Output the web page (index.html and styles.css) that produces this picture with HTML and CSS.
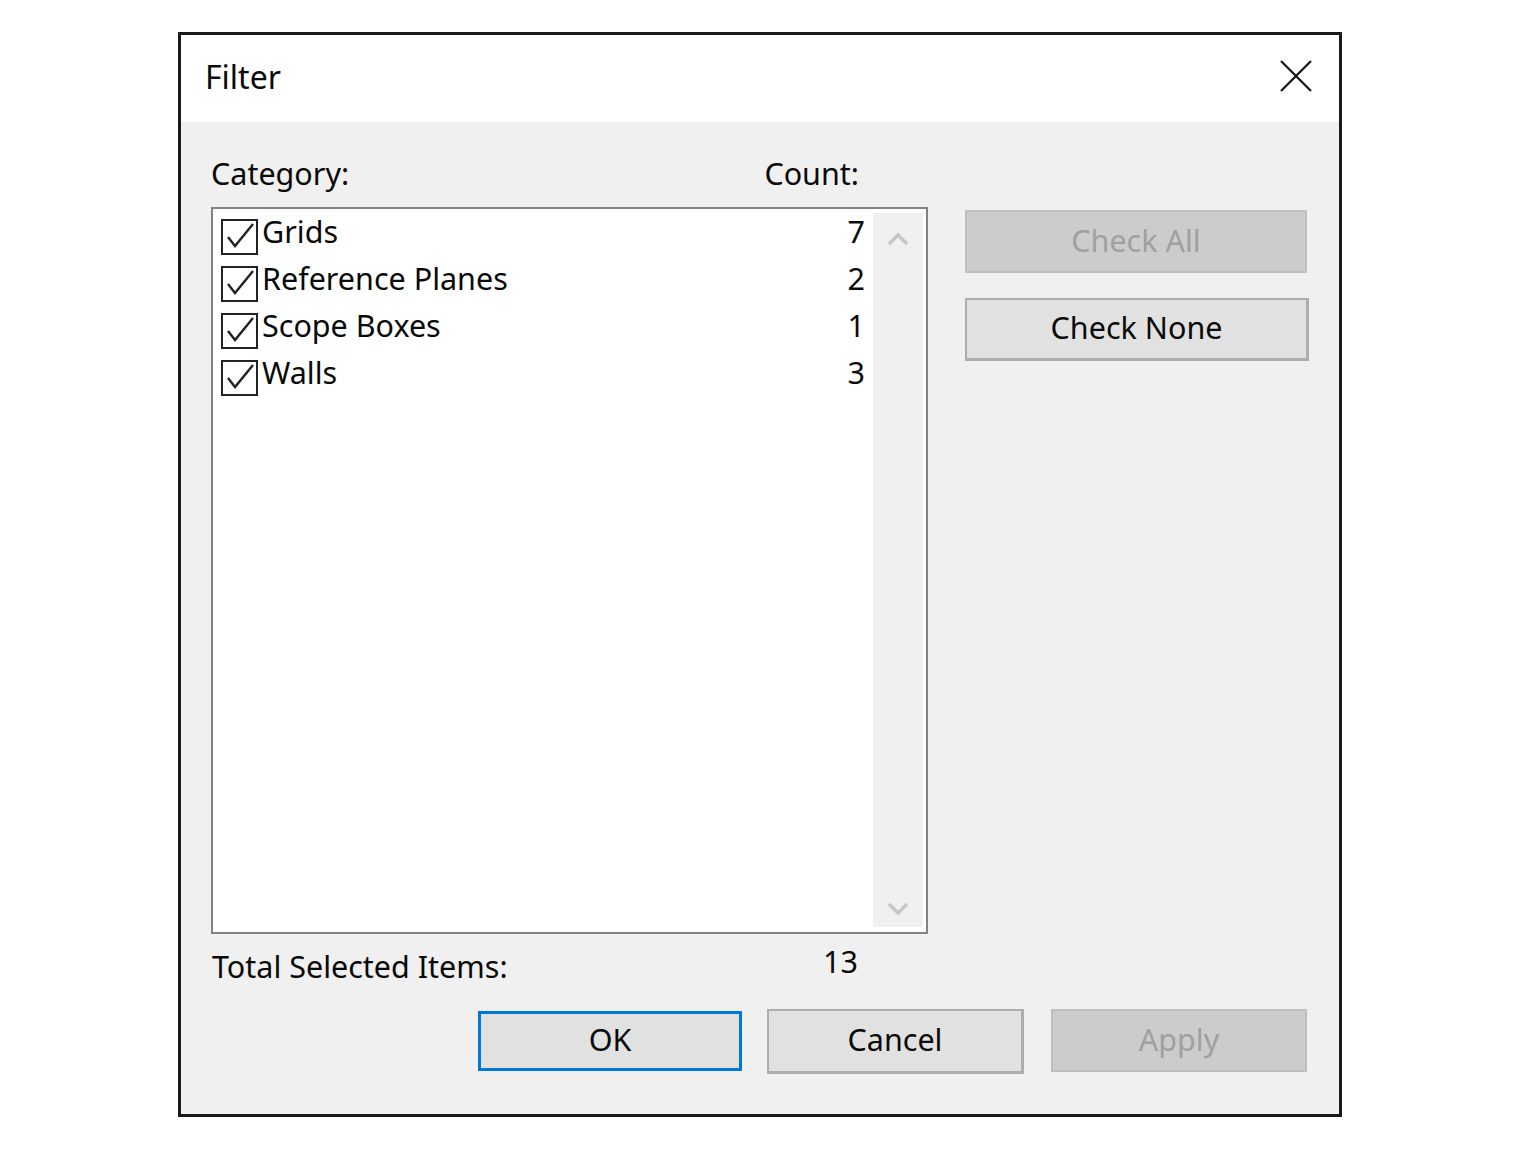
FILE: index.html
```html
<!DOCTYPE html>
<html>
<head>
<meta charset="utf-8">
<link rel="stylesheet" href="styles.css">
</head>
<body>
<div class="dialog">
  <div class="titlebar">
    <span class="title">Filter</span>
    <span class="close" aria-label="Close">
      <svg width="32" height="32" viewBox="0 0 32 32"><path d="M1 1 L31 31 M31 1 L1 31" stroke="#111" stroke-width="2.2" fill="none"/></svg>
    </span>
  </div>
  <div class="body">
    <div class="main">
      <div class="leftcol">
        <div class="headers">
          <span class="lbl">Category:</span>
          <span class="lbl count-lbl">Count:</span>
        </div>
        <div class="listbox">
          <div class="items">
            <div class="row"><span class="cb"><svg width="31" height="31" viewBox="0 0 31 31"><path d="M4 16 L11 25 L29 3" stroke="#222" stroke-width="2.4" fill="none"/></svg></span><span class="name">Grids</span><span class="num">7</span></div>
            <div class="row"><span class="cb"><svg width="31" height="31" viewBox="0 0 31 31"><path d="M4 16 L11 25 L29 3" stroke="#222" stroke-width="2.4" fill="none"/></svg></span><span class="name">Reference Planes</span><span class="num">2</span></div>
            <div class="row"><span class="cb"><svg width="31" height="31" viewBox="0 0 31 31"><path d="M4 16 L11 25 L29 3" stroke="#222" stroke-width="2.4" fill="none"/></svg></span><span class="name">Scope Boxes</span><span class="num">1</span></div>
            <div class="row"><span class="cb"><svg width="31" height="31" viewBox="0 0 31 31"><path d="M4 16 L11 25 L29 3" stroke="#222" stroke-width="2.4" fill="none"/></svg></span><span class="name">Walls</span><span class="num">3</span></div>
          </div>
          <div class="scrollbar">
            <svg width="24" height="16" viewBox="0 0 24 16"><path d="M3 13 L12 4 L21 13" stroke="#c6c6c6" stroke-width="3.5" fill="none"/></svg>
            <svg width="24" height="16" viewBox="0 0 24 16"><path d="M3 3 L12 12 L21 3" stroke="#c6c6c6" stroke-width="3.5" fill="none"/></svg>
          </div>
        </div>
        <div class="total">
          <span class="lbl">Total Selected Items:</span>
          <span class="lbl total-num">13</span>
        </div>
      </div>
      <div class="rightcol">
        <button class="btn disabled checkall">Check All</button>
        <button class="btn checknone">Check None</button>
      </div>
    </div>
    <div class="footer">
      <button class="btn ok">OK</button>
      <button class="btn cancel">Cancel</button>
      <button class="btn disabled apply">Apply</button>
    </div>
  </div>
</div>
</body>
</html>
```
FILE: styles.css
```css
html, body {
  margin: 0;
  padding: 0;
  background: #ffffff;
}
body {
  font-family: "Noto Sans", "Open Sans", sans-serif;
  font-size: 30.5px;
  color: #0a0a0a;
}
.dialog {
  margin: 32px 0 0 178px;
  width: 1164px;
  height: 1085px;
  box-sizing: border-box;
  border: 3px solid #1a1a1a;
  display: flex;
  flex-direction: column;
}
.titlebar {
  height: 87px;
  flex: none;
  background: #fff;
  display: flex;
  align-items: center;
  justify-content: space-between;
  padding: 0 27px 0 24px;
}
.title {
  font-size: 32px;
  margin-top: -4px;
}
.close {
  display: flex;
  margin-top: -6px;
}
.body {
  flex: 1;
  background: #f0f0f0;
  padding: 0 30px 0 30px;
  display: flex;
  flex-direction: column;
}
.main {
  display: flex;
  gap: 37px;
}
.leftcol {
  width: 717px;
  display: flex;
  flex-direction: column;
}
.headers {
  height: 85px;
  display: flex;
  align-items: center;
  padding-top: 18px;
  box-sizing: border-box;
}
.lbl {
  line-height: 1;
}
.count-lbl {
  margin-left: auto;
  margin-right: 69px;
}
.listbox {
  height: 727px;
  box-sizing: border-box;
  border: 2px solid #828282;
  background: #fff;
  display: flex;
}
.items {
  flex: 1;
  padding: 1px 8px 0 8px;
}
.row {
  height: 47px;
  display: flex;
  align-items: center;
}
.cb {
  width: 37px;
  height: 36px;
  box-sizing: border-box;
  border: 2.5px solid #222;
  display: flex;
  align-items: center;
  justify-content: center;
  margin-right: 4px;
  margin-top: 6px;
}
.name {
  margin-top: -5px;
}
.num {
  margin-left: auto;
  margin-top: -5px;
}
.scrollbar {
  width: 50px;
  margin: 4px 3px 5px 0;
  background: #f0f0f0;
  display: flex;
  flex-direction: column;
  justify-content: space-between;
  align-items: center;
  padding: 18px 0 10px;
}
.total {
  display: flex;
  align-items: center;
  height: 64px;
  padding-left: 1px;
}
.total-num {
  margin-left: auto;
  margin-right: 70px;
  margin-top: -10px;
}
.rightcol {
  padding-top: 88px;
  display: flex;
  flex-direction: column;
  gap: 25px;
}
.btn {
  font-family: inherit;
  font-size: 30.5px;
  color: #0a0a0a;
  background: #e1e1e1;
  border: 2px solid #adadad;
  box-sizing: border-box;
  padding: 0 0 4px;
  margin: 0;
}
.btn.disabled {
  background: #cccccc;
  border-color: #bfbfbf;
  color: #a0a0a0;
}
.checkall {
  width: 342px;
  height: 63px;
}
.checknone {
  width: 344px;
  height: 63px;
  border-right-width: 3px;
  border-bottom-width: 3px;
}
.footer {
  display: flex;
  align-items: flex-start;
  padding-left: 267px;
  margin-top: 11px;
}
.ok {
  width: 264px;
  height: 60px;
  border: 3px solid #0078d7;
  margin-top: 2px;
}
.cancel {
  width: 257px;
  height: 65px;
  margin-left: 25px;
  border-right-width: 3px;
  border-bottom-width: 3px;
}
.apply {
  width: 256px;
  height: 63px;
  margin-left: 27px;
}
```
